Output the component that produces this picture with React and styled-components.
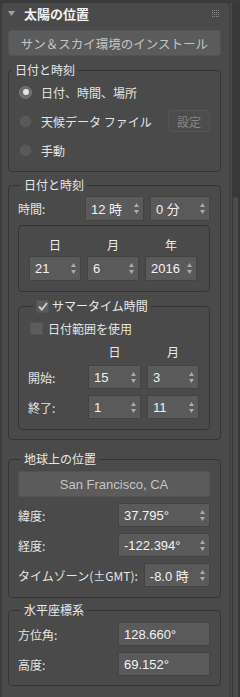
import React from "react";
import styled, { createGlobalStyle } from "styled-components";

const Global = createGlobalStyle`
  html, body { margin: 0; padding: 0; background: #3b3b3b; overflow: hidden; }
  * { box-sizing: border-box; }
`;

const Root = styled.div`
  width: 240px;
  height: 697px;
  display: flex;
  padding: 3px 0 0 2px;
  font-family: "Noto Sans CJK JP", "Noto Sans", sans-serif;
  font-size: 12px;
  color: #e4e4e4;
  overflow: hidden;
`;

const Panel = styled.div`
  width: 227px;
  background: #4a4a4a;
  border-radius: 3px 3px 0 0;
  padding: 0 8px 0 6px;
  display: flex;
  flex-direction: column;
`;

const Divider = styled.div`
  width: 3px;
  background: #474747;
  border-left: 1px solid #3e3e3e;
`;

const Track = styled.div`
  width: 8px;
  background: #383838;
  display: flex;
  flex-direction: column;
  padding: 194px 2px 0 1px;
`;

const Thumb = styled.div`
  flex: 1;
  background: #4b4b4b;
  border-radius: 3px 3px 0 0;
`;

const Header = styled.div`
  height: 20px;
  display: flex;
  align-items: center;
  margin-left: -6px;
  padding-left: 6px;
`;

const Title = styled.span`
  font-weight: bold;
  font-size: 13px;
  color: #f2f2f2;
  margin-left: 9px;
  flex: 1;
`;

const Grip = styled.div`
  display: grid;
  grid-template-columns: repeat(4, 1px);
  grid-auto-rows: 1px;
  gap: 1px;
  margin-right: 2px;
  span { background: #8a8a8a; }
`;

const Button = styled.div`
  height: ${(p) => p.$h || 26}px;
  margin-top: ${(p) => p.$mt || 0}px;
  background: #5b5b5b;
  border: 1px solid #535353;
  border-radius: 3px;
  display: flex;
  align-items: center;
  justify-content: center;
  color: #c4c4c4;
  font-family: ${(p) => (p.$latin ? '"Liberation Sans", "Noto Sans CJK JP", sans-serif' : "inherit")};
  font-size: ${(p) => (p.$latin ? 13 : 12.5)}px;
`;

const DisabledButton = styled.div`
  width: 42px;
  height: 22px;
  border: 1px solid #555;
  border-radius: 3px;
  background: #4c4c4c;
  color: #858585;
  display: flex;
  align-items: center;
  justify-content: center;
  margin-left: auto;
`;

const Group = styled.fieldset`
  margin: ${(p) => p.$mt}px 0 0;
  padding: ${(p) => p.$pad};
  border: 1px solid #353535;
  border-radius: 4px;
  min-width: 0;
  display: flex;
  flex-direction: column;
  gap: ${(p) => p.$gap || 0}px;
`;

const Legend = styled.legend`
  margin-left: ${(p) => p.$ml || 3}px;
  padding: 0 3px;
  line-height: 16px;
  height: 16px;
  color: #e8e8e8;
  display: flex;
  align-items: center;
  gap: 3px;
`;

const Box = styled.div`
  margin-top: ${(p) => p.$mt}px;
  padding: 11px 0 10px 10px;
  border: 1px solid #353535;
  border-radius: 4px;
`;

const RadioRow = styled.div`
  height: 22px;
  display: flex;
  align-items: center;
  gap: 9px;
  padding-left: 10px;
`;

const Radio = styled.span`
  width: 13px;
  height: 13px;
  border-radius: 50%;
  background: ${(p) => (p.$on ? "#6c6c6c" : "#595959")};
  border: 1px solid ${(p) => (p.$on ? "#7a7a7a" : "#505050")};
  display: flex;
  align-items: center;
  justify-content: center;
  &::after {
    content: "";
    width: 6px;
    height: 6px;
    border-radius: 50%;
    background: ${(p) => (p.$on ? "#e6e6e6" : "transparent")};
  }
`;

const Check = styled.span`
  width: 13px;
  height: 13px;
  background: #5c5c5c;
  border: 1px solid #525252;
  display: flex;
  align-items: center;
  justify-content: center;
`;

const CheckRow = styled.div`
  height: 16px;
  display: flex;
  align-items: center;
  gap: 5px;
  padding-left: 2px;
`;

const Row = styled.div`
  height: ${(p) => p.$h || 24}px;
  margin-top: ${(p) => p.$mt || 0}px;
  display: flex;
  align-items: center;
  gap: 6px;
`;

const Label = styled.span`
  flex: 1;
  color: #e4e4e4;
  white-space: nowrap;
`;

const Grid = styled.div`
  display: grid;
  grid-template-columns: ${(p) => p.$cols};
  column-gap: 6px;
  row-gap: ${(p) => p.$rg || 3}px;
  margin-top: ${(p) => p.$mt || 0}px;
  padding-left: ${(p) => p.$pl || 0}px;
  align-items: center;
`;

const ColHead = styled.span`
  text-align: center;
  line-height: 16px;
  color: #ececec;
`;

const Field = styled.div`
  width: ${(p) => (p.$w ? `${p.$w}px` : "auto")};
  height: ${(p) => p.$h || 24}px;
  background: #5a5a5a;
  border: 1px solid #434343;
  display: flex;
  align-items: center;
  padding: 0 4px 0 ${(p) => p.$pl || 5}px;
  color: #f2f2f2;
  font-family: "Liberation Sans", "Noto Sans CJK JP", sans-serif;
  font-size: 13px;
  white-space: nowrap;
`;

const Value = styled.span`
  flex: 1;
`;

const Arrows = () => (
  <svg width="5" height="11" viewBox="0 0 5 11">
    <polygon points="2.5,0 5,4 0,4" fill="#a9a9a9" />
    <polygon points="0,7 5,7 2.5,11" fill="#a9a9a9" />
  </svg>
);

const Spinner = ({ v, w, h, pl }) => (
  <Field $w={w} $h={h} $pl={pl}>
    <Value>{v}</Value>
    <Arrows />
  </Field>
);

const CheckMark = () => (
  <svg width="10" height="9" viewBox="0 0 10 9">
    <polyline points="1,4.5 3.8,7.5 9,1" fill="none" stroke="#c8c8c8" strokeWidth="2" />
  </svg>
);

export default function App() {
  return (
    <Root>
      <Global />
      <Panel>
        <Header>
          <svg width="7" height="5" viewBox="0 0 7 5">
            <polygon points="0,0 7,0 3.5,5" fill="#a0a0a0" />
          </svg>
          <Title>太陽の位置</Title>
          <Grip>
            {Array.from({ length: 16 }).map((_, i) => (
              <span key={i} />
            ))}
          </Grip>
        </Header>

        <Button $mt={7}>サン＆スカイ環境のインストール</Button>

        <Group $mt={6} $pad="3px 10px 10px 0" $gap={7}>
          <Legend>日付と時刻</Legend>
          <RadioRow>
            <Radio $on />
            日付、時間、場所
          </RadioRow>
          <RadioRow>
            <Radio />
            天候データ ファイル
            <DisabledButton>設定</DisabledButton>
          </RadioRow>
          <RadioRow>
            <Radio />
            手動
          </RadioRow>
        </Group>

        <Group $mt={5} $pad="3px 10px 9px 9px">
          <Legend>日付と時刻</Legend>
          <Row $h={25}>
            <Label>時間:</Label>
            <Spinner v="12 時" w={59} h={25} />
            <Spinner v="0 分" w={60} h={25} />
          </Row>
          <Box $mt={4}>
            <Grid $cols="52px 52px 52px">
              <ColHead>日</ColHead>
              <ColHead>月</ColHead>
              <ColHead>年</ColHead>
              <Spinner v="21" h={25} />
              <Spinner v="6" h={25} />
              <Spinner v="2016" h={25} />
            </Grid>
          </Box>
          <Group $mt={6} $pad="6px 0 10px 9px">
            <Legend $ml={5}>
              <Check>
                <CheckMark />
              </Check>
              サマータイム時間
            </Legend>
            <CheckRow>
              <Check />
              日付範囲を使用
            </CheckRow>
            <Grid $cols="54px 53px 52px" $mt={8} $rg={5}>
              <span />
              <ColHead>日</ColHead>
              <ColHead>月</ColHead>
              <Label>開始:</Label>
              <Spinner v="15" />
              <Spinner v="3" />
            </Grid>
            <Grid $cols="54px 53px 52px" $mt={6}>
              <Label>終了:</Label>
              <Spinner v="1" />
              <Spinner v="11" />
            </Grid>
          </Group>
        </Group>

        <Group $mt={11} $pad="4px 10px 10px 9px" $gap={6}>
          <Legend>地球上の位置</Legend>
          <Button $latin>San Francisco, CA</Button>
          <Row>
            <Label>緯度:</Label>
            <Spinner v="37.795°" w={92} />
          </Row>
          <Row>
            <Label>経度:</Label>
            <Spinner v="-122.394°" w={92} />
          </Row>
          <Row>
            <Label>タイムゾーン(±GMT):</Label>
            <Spinner v="-8.0 時" w={72} />
          </Row>
        </Group>

        <Group $mt={4} $pad="4px 10px 9px 9px" $gap={6}>
          <Legend>水平座標系</Legend>
          <Row>
            <Label>方位角:</Label>
            <Field $w={92}>128.660°</Field>
          </Row>
          <Row>
            <Label>高度:</Label>
            <Field $w={92}>69.152°</Field>
          </Row>
        </Group>
      </Panel>
      <Divider />
      <Track>
        <Thumb />
      </Track>
    </Root>
  );
}
